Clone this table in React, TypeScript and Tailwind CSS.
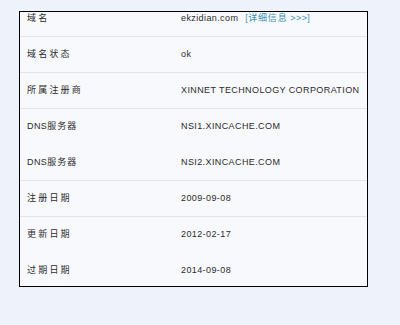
import React from 'react'

type Row = { label: React.ReactNode; value: React.ReactNode; line: boolean }

const cn = (s: string) => <span className="tracking-[2.2px]">{s}</span>

const rows: Row[] = [
  {
    label: cn('域名'),
    value: (
      <>
        ekzidian.com
        <span className="ml-[7px] text-[#3a93ad]">
          [<span className="tracking-[0.8px]">详细信息</span> &gt;&gt;&gt;]
        </span>
      </>
    ),
    line: true,
  },
  { label: cn('域名状态'), value: 'ok', line: true },
  { label: cn('所属注册商'), value: 'XINNET TECHNOLOGY CORPORATION', line: true },
  { label: <>DNS<span className="tracking-[1px]">服务器</span></>, value: 'NSI1.XINCACHE.COM', line: false },
  { label: <>DNS<span className="tracking-[1px]">服务器</span></>, value: 'NSI2.XINCACHE.COM', line: true },
  { label: cn('注册日期'), value: '2009-09-08', line: true },
  { label: cn('更新日期'), value: '2012-02-17', line: false },
  { label: cn('过期日期'), value: '2014-09-08', line: false },
]

export default function App() {
  return (
    <div className="w-[400px] h-[325px] bg-[#eef2fa] pt-[11px] pl-[19px]">
      <div
        className="w-[349px] h-[276px] border border-black bg-[#f8f9fd] overflow-hidden text-[9px] tracking-[0.4px] text-[#2b2b2b]"
        style={{ fontFamily: '"Liberation Sans", "Noto Sans CJK SC", sans-serif' }}
      >
        <div className="-mt-[11px]">
          {rows.map((r, i) => (
            <div
              key={i}
              className={
                'grid grid-cols-[154px_1fr] items-center h-[36px] pl-[7px] ' +
                (r.line ? 'border-b border-[#e1e4ea]' : '')
              }
            >
              <div>{r.label}</div>
              <div className="whitespace-nowrap">{r.value}</div>
            </div>
          ))}
        </div>
      </div>
    </div>
  )
}
